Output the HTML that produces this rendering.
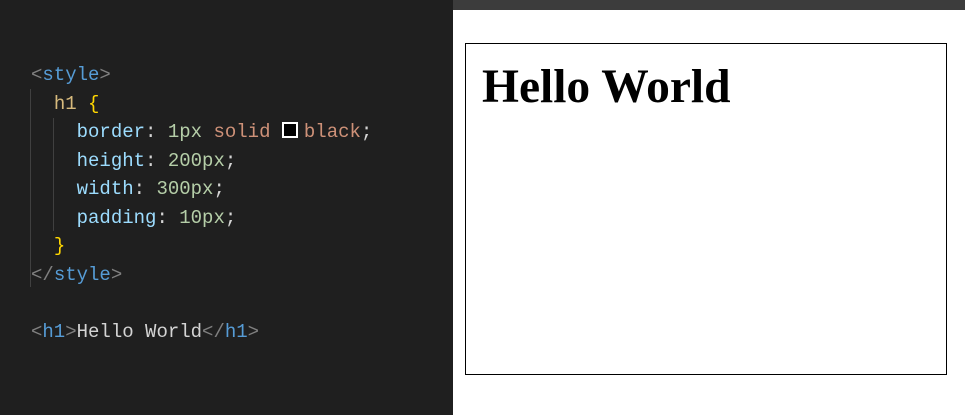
<!DOCTYPE html>
<html><head><style>
body{margin:0;width:965px;height:415px;overflow:hidden;background:#1f1f1f;position:relative}
#ed{position:absolute;left:0;top:0;width:453px;height:415px;background:#1f1f1f}
.l{position:absolute;left:31px;font:19px/28px "Liberation Mono",monospace;color:#d4d4d4;white-space:pre;height:28px}
.t{color:#808080}.n{color:#569cd6}.s{color:#d7ba7d}.b{color:#ffd700}.p{color:#9cdcfe}.v{color:#b5cea8}.k{color:#ce9178}
.g{position:absolute;width:1px;background:#404040}
.sw{display:inline-block;width:12px;height:12px;border:2px solid #fff;background:#000;vertical-align:-1px;margin-right:6px}
#pv{position:absolute;left:453px;top:0;width:512px;height:415px;background:#fff}
#bar{position:absolute;left:0;top:0;width:512px;height:10px;background:#3c3c3c}
#box{position:absolute;left:12px;top:43px;width:480px;height:330px;border:1px solid #000}
#box h1{margin:0;position:absolute;left:16px;top:16px;font:bold 47.5px "Liberation Serif",serif;color:#000}
</style></head><body>
<div id="ed">
<div class="g" style="left:30px;top:89px;height:198px"></div>
<div class="g" style="left:53px;top:118px;height:113px"></div>
<div class="l" style="top:61px"><span class="t">&lt;</span><span class="n">style</span><span class="t">&gt;</span></div>
<div class="l" style="top:90px">  <span class="s">h1</span> <span class="b">{</span></div>
<div class="l" style="top:118px">    <span class="p">border</span>: <span class="v">1px</span> <span class="k">solid</span> <span class="sw"></span><span class="k">black</span>;</div>
<div class="l" style="top:147px">    <span class="p">height</span>: <span class="v">200px</span>;</div>
<div class="l" style="top:175px">    <span class="p">width</span>: <span class="v">300px</span>;</div>
<div class="l" style="top:204px">    <span class="p">padding</span>: <span class="v">10px</span>;</div>
<div class="l" style="top:232px">  <span class="b">}</span></div>
<div class="l" style="top:261px"><span class="t">&lt;/</span><span class="n">style</span><span class="t">&gt;</span></div>
<div class="l" style="top:318px"><span class="t">&lt;</span><span class="n">h1</span><span class="t">&gt;</span>Hello World<span class="t">&lt;/</span><span class="n">h1</span><span class="t">&gt;</span></div>
</div>
<div id="pv"><div id="bar"></div><div id="box"><h1>Hello World</h1></div></div>
</body></html>
